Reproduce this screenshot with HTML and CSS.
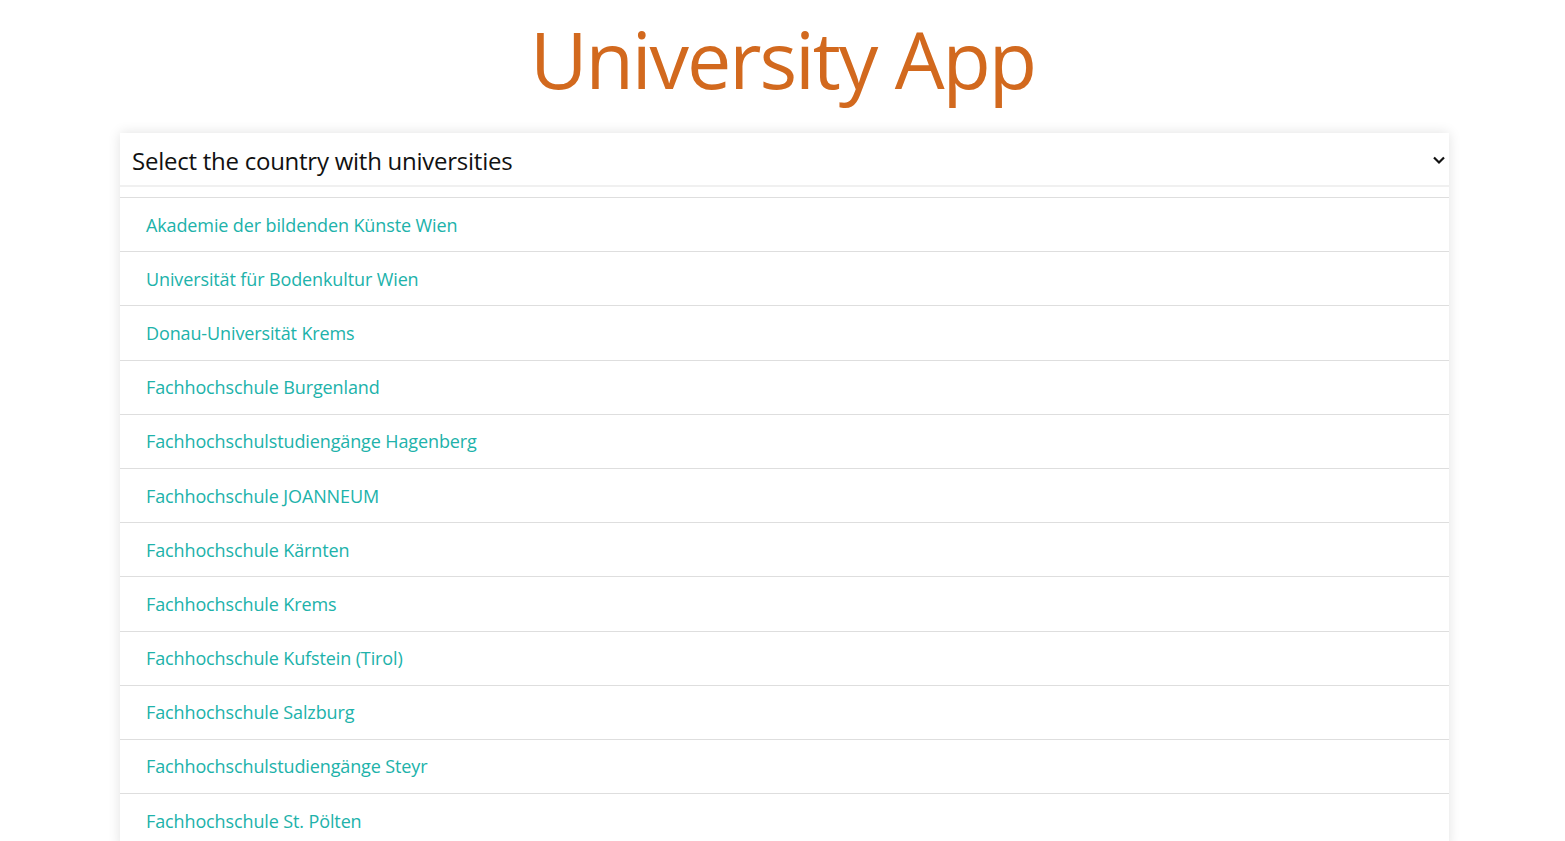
FILE: index.html
```html
<!DOCTYPE html>
<html lang="de">
<head>
<meta charset="utf-8">
<title>University App</title>
<link rel="stylesheet" href="styles.css">
</head>
<body>
<h1 class="title">University App</h1>
<div class="card">
  <div class="select">
    <span class="select-label">Select the country with universities</span>
    <svg class="chevron" width="14" height="10" viewBox="0 0 14 10"><path d="M2 2.5 L7 7.5 L12 2.5" fill="none" stroke="#111" stroke-width="2.2"/></svg>
  </div>
  <ul class="list">
    <li class="item"><a class="link">Akademie der bildenden Künste Wien</a></li>
    <li class="item"><a class="link">Universität für Bodenkultur Wien</a></li>
    <li class="item"><a class="link">Donau-Universität Krems</a></li>
    <li class="item"><a class="link">Fachhochschule Burgenland</a></li>
    <li class="item"><a class="link">Fachhochschulstudiengänge Hagenberg</a></li>
    <li class="item"><a class="link">Fachhochschule JOANNEUM</a></li>
    <li class="item"><a class="link">Fachhochschule Kärnten</a></li>
    <li class="item"><a class="link">Fachhochschule Krems</a></li>
    <li class="item"><a class="link">Fachhochschule Kufstein (Tirol)</a></li>
    <li class="item"><a class="link">Fachhochschule Salzburg</a></li>
    <li class="item"><a class="link">Fachhochschulstudiengänge Steyr</a></li>
    <li class="item"><a class="link">Fachhochschule St. Pölten</a></li>
  </ul>
</div>
</body>
</html>
```
FILE: styles.css
```css
html, body {
  margin: 0;
  padding: 0;
  background: #fff;
}
body {
  font-family: "Open Sans", "Noto Sans", sans-serif;
}
.title {
  margin: 0;
  padding-top: 9px;
  height: 119px;
  box-sizing: border-box;
  text-align: center;
  font-weight: 400;
  font-size: 79px;
  line-height: 100px;
  letter-spacing: -2.1px;
  color: #d2691e;
}
.card {
  width: 1329px;
  margin: 14px 0 0 120px;
  background: #fff;
  box-shadow: 0 0 12px rgba(0, 0, 0, 0.12);
}
.select {
  height: 54px;
  box-sizing: border-box;
  border-bottom: 2px solid #f0f0f0;
  display: flex;
  align-items: center;
  justify-content: space-between;
  padding: 2px 3px 0 12px;
}
.select-label {
  font-size: 24px;
  letter-spacing: -0.25px;
  color: #111;
}
.chevron {
  display: block;
}
.list {
  list-style: none;
  margin: 10px 0 0;
  padding: 0;
  border-top: 1px solid #dedede;
}
.item {
  height: 54.2px;
  box-sizing: border-box;
  border-bottom: 1px solid #dedede;
  display: flex;
  align-items: center;
  padding: 0 0 0 26px;
}
.link {
  font-size: 18px;
  letter-spacing: -0.12px;
  color: #20b2aa;
}
```
